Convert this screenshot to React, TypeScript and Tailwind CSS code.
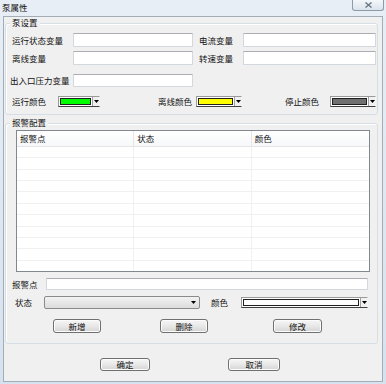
import React from 'react';

const Tri = () => (
  <svg width="5" height="3" viewBox="0 0 5 3" className="block">
    <path d="M0 0h5L2.5 3z" fill="#000" />
  </svg>
);

// 文本框
const TextBox = ({ className }: { className: string }) => (
  <div className={`bg-white border border-[#d3d8de] border-t-[#abadb3] rounded-[1px] ${className}`} />
);

// 颜色下拉框
const ColorCombo = ({ fill, className }: { fill: string; className: string }) => (
  <div className={`flex h-[11px] border border-[#9a9a9a] border-r-[#f4f4f4] border-b-[#404040] bg-white ${className}`}>
    <div className="flex-1 p-[1px]">
      <div className={`h-full border border-[#202020] ${fill}`} />
    </div>
    <div className="w-[7px] flex items-center justify-center border-l border-[#a0a0a0] bg-[#f0f0f0]">
      <Tri />
    </div>
  </div>
);

const Btn = ({ label, className }: { label: string; className: string }) => (
  <div
    className={`flex items-center justify-center border border-[#707070] rounded-[3px] bg-gradient-to-b from-[#f6f6f6] via-[#e8e8e8] to-[#d4d4d4] shadow-[inset_0_0_0_1px_#fcfcfc] ${className}`}
  >
    <span className="leading-none">{label}</span>
  </div>
);

const GroupBox = ({ title, className, children }: { title: string; className: string; children: React.ReactNode }) => (
  <div className={`relative border border-[#d5dfe5] rounded-[3px] shadow-[inset_1px_1px_0_#fff] ${className}`}>
    <span className="absolute -top-[6px] left-[4px] px-[2px] bg-[#f0f0f0] leading-none">{title}</span>
    {children}
  </div>
);

export default function App() {
  return (
    <div className="w-[386px] h-[384px] flex flex-col bg-gradient-to-b from-[#e8eef5] to-[#d6e2ee] text-[8.5px] text-[#111] font-['Noto_Sans_CJK_SC',sans-serif] overflow-hidden">
      {/* 标题栏 */}
      <div className="h-[16px] flex items-start justify-between">
        <span className="pl-[2px] pt-[3px] leading-none">泵属性</span>
        <div className="mr-[2px] w-[32px] h-[11px] flex items-center justify-center border border-t-0 border-[#8c9aab] rounded-b-[3px] bg-gradient-to-b from-[#f4f7fa] to-[#dbe3ec]">
          <svg width="7" height="6" viewBox="0 0 7 6">
            <path d="M0.5 0.5L6.5 5.5M6.5 0.5L0.5 5.5" stroke="#6b7785" strokeWidth="1.4" />
          </svg>
        </div>
      </div>

      {/* 主体 */}
      <div className="mx-[3px] h-[366px] bg-[#f0f0f0] border border-[#a3adb8] flex flex-col">
        <GroupBox title="泵设置" className="ml-[1px] mr-[4px] mt-[6px] h-[92px] flex flex-col">
          <div className="mt-[9px] h-[14px] flex items-center pl-[6px]">
            <span className="w-[61px] leading-none">运行状态变量</span>
            <TextBox className="w-[120px] h-[14px]" />
            <span className="ml-[6px] w-[44px] leading-none">电流变量</span>
            <TextBox className="w-[133px] h-[14px]" />
          </div>
          <div className="mt-[4px] h-[14px] flex items-center pl-[6px]">
            <span className="w-[61px] leading-none">离线变量</span>
            <TextBox className="w-[120px] h-[14px]" />
            <span className="ml-[6px] w-[44px] leading-none">转速变量</span>
            <TextBox className="w-[133px] h-[14px]" />
          </div>
          <div className="mt-[9px] h-[13px] flex items-center pl-[4px]">
            <span className="w-[63px] leading-none">出入口压力变量</span>
            <TextBox className="w-[120px] h-[13px]" />
          </div>
          <div className="mt-[9px] h-[11px] flex items-center pl-[6px]">
            <span className="w-[46px] leading-none">运行颜色</span>
            <ColorCombo fill="bg-[#00ff00]" className="w-[42px]" />
            <span className="ml-[58px] w-[38px] leading-none">离线颜色</span>
            <ColorCombo fill="bg-[#ffff00]" className="w-[46px]" />
            <span className="ml-[43px] w-[45px] leading-none">停止颜色</span>
            <ColorCombo fill="bg-[#707070]" className="w-[46px]" />
          </div>
        </GroupBox>

        <GroupBox title="报警配置" className="ml-[1px] mr-[4px] mt-[8px] h-[221px] flex flex-col">
          {/* 报警列表 */}
          <div className="ml-[10px] mt-[6px] w-[354px] h-[142px] bg-white border border-[#828790] flex flex-col">
            <div className="h-[16px] grid grid-cols-3 border-b border-[#e5e5e5] bg-gradient-to-b from-white to-[#f7f8fa]">
              <span className="pl-[3px] flex items-center leading-none border-r border-[#e5e5e5]">报警点</span>
              <span className="pl-[3px] flex items-center leading-none border-r border-[#e5e5e5]">状态</span>
              <span className="pl-[3px] flex items-center leading-none">颜色</span>
            </div>
            <div className="flex-1 flex flex-col">
              {Array.from({ length: 11 }).map((_, i) => (
                <div key={i} className="flex-1 grid grid-cols-3 border-b border-[#f0f0f0] last:border-b-0">
                  <div className="border-r border-[#f0f0f0]" />
                  <div className="border-r border-[#f0f0f0]" />
                  <div />
                </div>
              ))}
            </div>
          </div>

          <div className="mt-[6px] h-[12px] flex items-center pl-[6px]">
            <span className="w-[34px] leading-none">报警点</span>
            <TextBox className="w-[322px] h-[12px]" />
          </div>
          <div className="mt-[6px] h-[13px] flex items-center pl-[9px]">
            <span className="w-[29px] leading-none">状态</span>
            <div className="w-[156px] h-[13px] flex items-center justify-end pr-[3px] border border-[#8a8a8a] rounded-[2px] bg-gradient-to-b from-[#f2f2f2] to-[#dcdcdc]">
              <Tri />
            </div>
            <span className="ml-[11px] w-[30px] leading-none">颜色</span>
            <ColorCombo fill="bg-white" className="w-[127px]" />
          </div>
          <div className="mt-[10px] h-[14px] flex items-center pl-[47px]">
            <Btn label="新增" className="w-[48px] h-[14px]" />
            <Btn label="删除" className="ml-[59px] w-[48px] h-[14px]" />
            <Btn label="修改" className="ml-[65px] w-[49px] h-[14px]" />
          </div>
        </GroupBox>

        <div className="mt-[14px] h-[13px] flex items-center pl-[96px]">
          <Btn label="确定" className="w-[50px] h-[13px]" />
          <Btn label="取消" className="ml-[78px] w-[52px] h-[13px]" />
        </div>
      </div>
    </div>
  );
}
